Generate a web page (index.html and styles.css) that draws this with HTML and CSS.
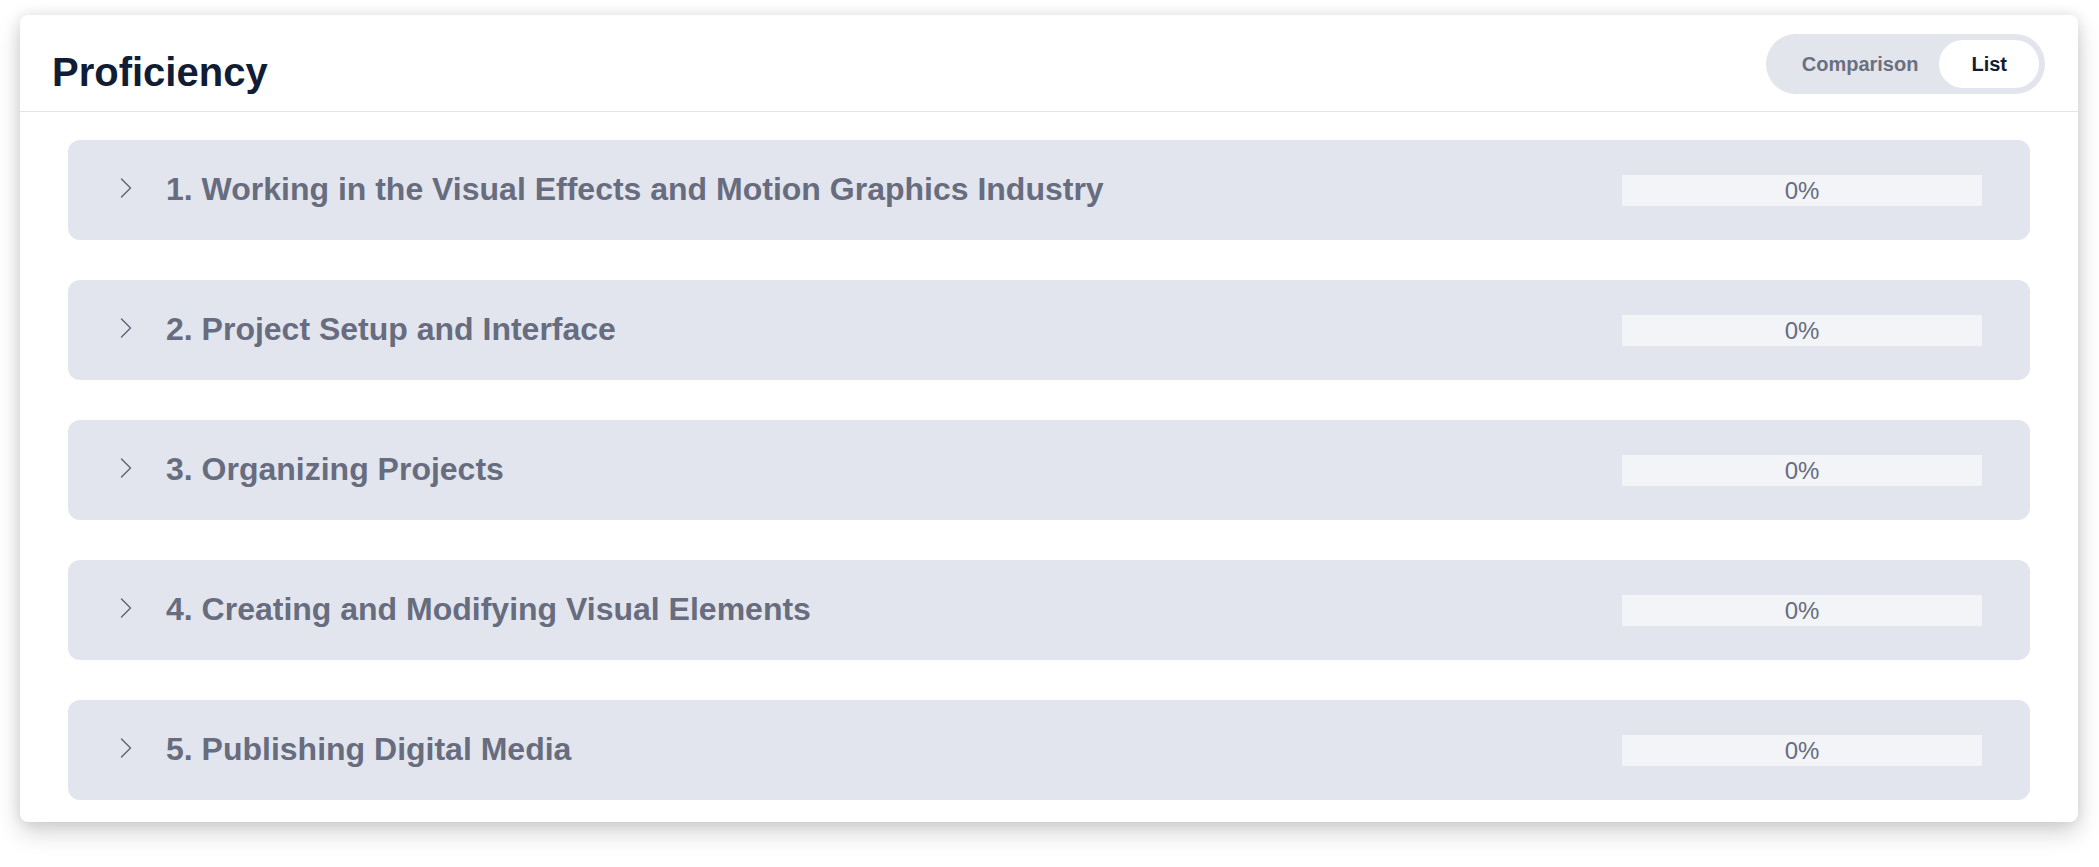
FILE: index.html
```html
<!DOCTYPE html>
<html lang="en">
<head>
<meta charset="utf-8">
<title>Proficiency</title>
<link rel="stylesheet" href="styles.css">
</head>
<body>
<section class="card">
  <header class="card-header">
    <h1 class="title">Proficiency</h1>
    <div class="toggle">
      <button class="toggle-btn">Comparison</button>
      <button class="toggle-btn active">List</button>
    </div>
  </header>
  <div class="list">
    <div class="row">
      <svg class="chev" width="12" height="20" viewBox="0 0 12 20"><polyline points="1.5,1 10.5,10 1.5,19" fill="none" stroke="#5d6274" stroke-width="1.4" stroke-linecap="round" stroke-linejoin="round"/></svg>
      <span class="row-title">1. Working in the Visual Effects and Motion Graphics Industry</span>
      <div class="bar"><span class="bar-label">0%</span></div>
    </div>
    <div class="row">
      <svg class="chev" width="12" height="20" viewBox="0 0 12 20"><polyline points="1.5,1 10.5,10 1.5,19" fill="none" stroke="#5d6274" stroke-width="1.4" stroke-linecap="round" stroke-linejoin="round"/></svg>
      <span class="row-title">2. Project Setup and Interface</span>
      <div class="bar"><span class="bar-label">0%</span></div>
    </div>
    <div class="row">
      <svg class="chev" width="12" height="20" viewBox="0 0 12 20"><polyline points="1.5,1 10.5,10 1.5,19" fill="none" stroke="#5d6274" stroke-width="1.4" stroke-linecap="round" stroke-linejoin="round"/></svg>
      <span class="row-title">3. Organizing Projects</span>
      <div class="bar"><span class="bar-label">0%</span></div>
    </div>
    <div class="row">
      <svg class="chev" width="12" height="20" viewBox="0 0 12 20"><polyline points="1.5,1 10.5,10 1.5,19" fill="none" stroke="#5d6274" stroke-width="1.4" stroke-linecap="round" stroke-linejoin="round"/></svg>
      <span class="row-title">4. Creating and Modifying Visual Elements</span>
      <div class="bar"><span class="bar-label">0%</span></div>
    </div>
    <div class="row">
      <svg class="chev" width="12" height="20" viewBox="0 0 12 20"><polyline points="1.5,1 10.5,10 1.5,19" fill="none" stroke="#5d6274" stroke-width="1.4" stroke-linecap="round" stroke-linejoin="round"/></svg>
      <span class="row-title">5. Publishing Digital Media</span>
      <div class="bar"><span class="bar-label">0%</span></div>
    </div>
  </div>
</section>
</body>
</html>
```
FILE: styles.css
```css
* { box-sizing: border-box; }
html, body { margin: 0; padding: 0; background: #ffffff; }
body {
  font-family: "Liberation Sans", Arial, sans-serif;
  padding: 15px 21px 45px 20px;
  min-height: 867px;
}
.card {
  background: #ffffff;
  border-radius: 8px;
  box-shadow: 0 10px 24px rgba(0, 0, 0, 0.18), 0 0 14px rgba(0, 0, 0, 0.09);
  padding-bottom: 22px;
}
.card-header {
  display: flex;
  justify-content: space-between;
  align-items: flex-start;
  padding: 19px 33px 15px 32px;
  border-bottom: 1px solid #e1e3e7;
}
.title {
  margin: 14px 0 0 0;
  font-size: 40px;
  line-height: 48px;
  font-weight: 700;
  color: #111d35;
}
.toggle {
  display: flex;
  height: 60px;
  padding: 6px;
  background: #e2e5ec;
  border-radius: 30px;
}
.toggle-btn {
  font-family: "Liberation Sans", Arial, sans-serif;
  font-size: 20px;
  font-weight: 700;
  color: #6b7080;
  background: transparent;
  border: 0;
  padding: 0 21px 0 30px;
  border-radius: 24px;
  height: 48px;
  cursor: pointer;
}
.toggle-btn.active {
  background: #ffffff;
  color: #111d35;
  padding: 0 32px;
}
.list {
  display: flex;
  flex-direction: column;
  gap: 40px;
  padding: 28px 48px 0 48px;
}
.row {
  display: flex;
  align-items: center;
  height: 100px;
  background: #e2e5ed;
  border-radius: 12px;
  padding: 0 48px 0 52px;
}
.chev {
  flex: none;
  margin-top: -4px;
}
.row-title {
  flex: 1;
  margin-left: 34px;
  margin-top: -2px;
  font-size: 32px;
  font-weight: 700;
  color: #676c7e;
  white-space: nowrap;
}
.bar {
  flex: none;
  width: 360px;
  height: 31px;
  background: #f3f4f7;
  display: flex;
  align-items: center;
  justify-content: center;
  margin-top: 1px;
}
.bar-label {
  font-size: 24px;
  color: #676c7e;
  line-height: 31px;
}
```
